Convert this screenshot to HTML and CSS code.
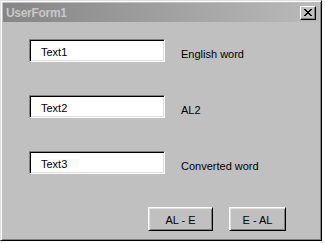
FILE: index.html
```html
<!DOCTYPE html>
<html lang="en">
<head>
    <meta charset="UTF-8">
    <title>UserForm1</title>
    <link rel="stylesheet" href="styles.css">
</head>
<body>
    <div class="window">
        <div class="titlebar">
            <span class="title">UserForm1</span>
            <button class="btn-close">
                <svg width="8" height="7" viewBox="0 0 8 7">
                    <path d="M0 0h2v1h1v1h2v-1h1v-1h2v1h-1v1h-1v1h-1v1h1v1h1v1h1v1h-2v-1h-1v-1h-2v1h-1v1h-2v-1h1v-1h1v-1h1v-1h-1v-1h-1v-1h-1z" fill="#000"/>
                </svg>
            </button>
        </div>
        <div class="form">
            <div class="row">
                <div class="textbox">Text1</div>
                <span class="label">English word</span>
            </div>
            <div class="row">
                <div class="textbox">Text2</div>
                <span class="label">AL2</span>
            </div>
            <div class="row">
                <div class="textbox">Text3</div>
                <span class="label">Converted word</span>
            </div>
            <div class="actions">
                <button class="btn btn-al-e">AL - E</button>
                <button class="btn btn-e-al">E - AL</button>
            </div>
        </div>
    </div>
</body>
</html>
```

FILE: styles.css
```css
body {
    margin: 0;
    background: #fff;
    font-family: "Liberation Sans", Arial, sans-serif;
    font-size: 11px;
    color: #000;
}

.window {
    width: 322px;
    height: 241px;
    box-sizing: border-box;
    background: #c0c0c0;
    border: 1px solid;
    border-color: #dfdfdf #000 #000 #dfdfdf;
    box-shadow: inset 1px 1px #fff, inset -1px -1px #808080;
    padding: 2px;
}

.titlebar {
    height: 19px;
    display: flex;
    align-items: center;
    justify-content: space-between;
    background: linear-gradient(to right, #858585, #bababa);
    padding: 0 3px 0 3px;
}

.title {
    font-weight: bold;
    font-size: 12px;
    letter-spacing: -0.3px;
    color: #c8c8c8;
}

.btn-close {
    width: 16px;
    height: 14px;
    padding: 0;
    display: flex;
    align-items: center;
    justify-content: center;
    background: #c0c0c0;
    border: 1px solid;
    border-color: #fff #000 #000 #fff;
    box-shadow: inset -1px -1px #808080;
}

.form {
    padding: 17px 0 0 26px;
}

.row {
    display: flex;
    margin-bottom: 33px;
}

.row:last-of-type {
    margin-bottom: 0;
}

.textbox {
    width: 136px;
    height: 23px;
    box-sizing: border-box;
    background: #fff;
    border: 1px solid;
    border-color: #808080 #fff #fff #808080;
    box-shadow: inset 1px 1px #000, inset -1px -1px #dfdfdf;
    padding: 4px 0 0 11px;
    line-height: 16px;
}

.label {
    margin-left: 16px;
    padding-top: 8px;
    line-height: 14px;
}

.actions {
    display: flex;
    justify-content: flex-end;
    gap: 16px;
    margin-top: 25px;
    padding-right: 33px;
}

.btn {
    height: 24px;
    padding: 2px 0 0;
    font-family: inherit;
    font-size: 11px;
    color: #000;
    background: #c0c0c0;
    border: 1px solid;
    border-color: #fff #000 #000 #fff;
    box-shadow: inset 1px 1px #dfdfdf, inset -1px -1px #808080;
}

.btn-al-e {
    width: 65px;
}

.btn-e-al {
    width: 57px;
}
```
